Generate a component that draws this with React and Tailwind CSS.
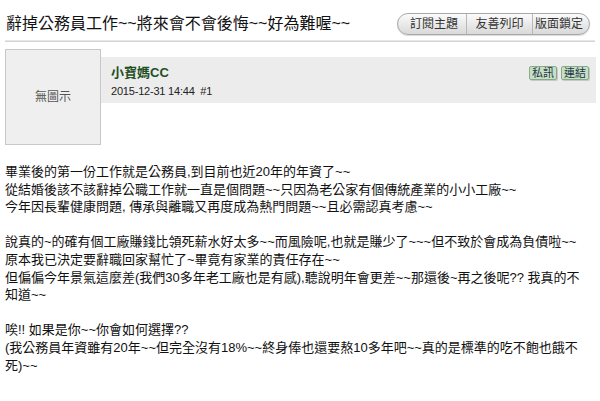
export default function App() {
  const font = { fontFamily: '"Liberation Sans", "Noto Sans CJK TC", sans-serif' };
  const lines1 = [
    "畢業後的第一份工作就是公務員,到目前也近20年的年資了~~",
    "從結婚後該不該辭掉公職工作就一直是個問題~~只因為老公家有個傳統產業的小小工廠~~",
    "今年因長輩健康問題, 傳承與離職又再度成為熱門問題~~且必需認真考慮~~",
  ];
  const lines2 = [
    "說真的~的確有個工廠賺錢比領死薪水好太多~~而風險呢,也就是賺少了~~~但不致於會成為負債啦~~",
    "原本我已決定要辭職回家幫忙了~畢竟有家業的責任存在~~",
    "但偏偏今年景氣這麼差(我們30多年老工廠也是有感),聽說明年會更差~~那還後~再之後呢?? 我真的不",
    "知道~~",
  ];
  const lines3 = [
    "唉!! 如果是你~~你會如何選擇??",
    "(我公務員年資雖有20年~~但完全沒有18%~~終身俸也還要熬10多年吧~~真的是標準的吃不飽也餓不",
    "死)~~",
  ];
  const Line = ({ t }) => (
    <div className="whitespace-nowrap h-[17.6px] leading-[17.6px]">{t}</div>
  );
  return (
    <div className="w-[600px] h-[401px] bg-white overflow-hidden text-black" style={font}>
      <div className="flex items-center justify-between pl-[6px] pr-[10px] h-[40px] pt-[7px]">
        <div className="text-[16px] leading-[20px] text-[#111] whitespace-nowrap">
          辭掉公務員工作~~將來會不會後悔~~好為難喔~~
        </div>
        <div className="flex h-[22px] border border-[#a8a8a8] rounded-full overflow-hidden bg-gradient-to-b from-[#fbfbfb] to-[#d9d9d9] shadow-[0_1px_1px_rgba(0,0,0,0.15)]">
          <div className="w-[69px] flex items-center justify-center text-[12px] text-[#333] border-r border-[#b8b8b8] pl-[4px]">訂閱主題</div>
          <div className="w-[66px] flex items-center justify-center text-[12px] text-[#333] border-r border-[#b8b8b8]">友善列印</div>
          <div className="w-[56px] flex items-center justify-center text-[12px] text-[#333] pr-[4px]">版面鎖定</div>
        </div>
      </div>
      <div className="mx-[5px] h-[2px] bg-[#d4d4d4] border-t border-[#e6e6e6]"></div>
      <div className="flex pl-[5px] pt-[7px]">
        <div className="w-[96px] h-[96px] bg-[#efefef] border border-[#c8c8c8] flex items-center justify-center text-[12px] text-[#555] shrink-0">
          無圖示
        </div>
        <div className="mt-[8px] w-[495px] h-[46px] bg-[#ececec] flex justify-between pl-[10px] pr-[7px]">
          <div className="pt-[7px]">
            <div className="text-[13px] leading-[17px] text-[#1f4f1f] font-bold">小寶媽CC</div>
            <div className="text-[11px] leading-[16px] text-[#222] mt-[2px] tracking-[-0.2px]">2015-12-31 14:44&nbsp;&nbsp;#1</div>
          </div>
          <div className="flex gap-[4px] pt-[9px]">
            <div className="h-[14px] px-[2px] bg-[#c6e0c6] border border-[#88aa88] text-[11px] leading-[12px] text-[#234] rounded-[2px] shadow-[1px_1px_0_rgba(0,0,0,0.15)]">私訊</div>
            <div className="h-[14px] px-[2px] bg-[#c6e0c6] border border-[#88aa88] text-[11px] leading-[12px] text-[#234] rounded-[2px] shadow-[1px_1px_0_rgba(0,0,0,0.15)]">連結</div>
          </div>
        </div>
      </div>
      <div className="pl-[5px] mt-[18px] text-[13px] text-[#111]">
        {lines1.map((l, i) => <Line key={"a" + i} t={l} />)}
        <div className="h-[17.6px]"></div>
        {lines2.map((l, i) => <Line key={"b" + i} t={l} />)}
        <div className="h-[17.6px]"></div>
        {lines3.map((l, i) => <Line key={"c" + i} t={l} />)}
      </div>
    </div>
  );
}
